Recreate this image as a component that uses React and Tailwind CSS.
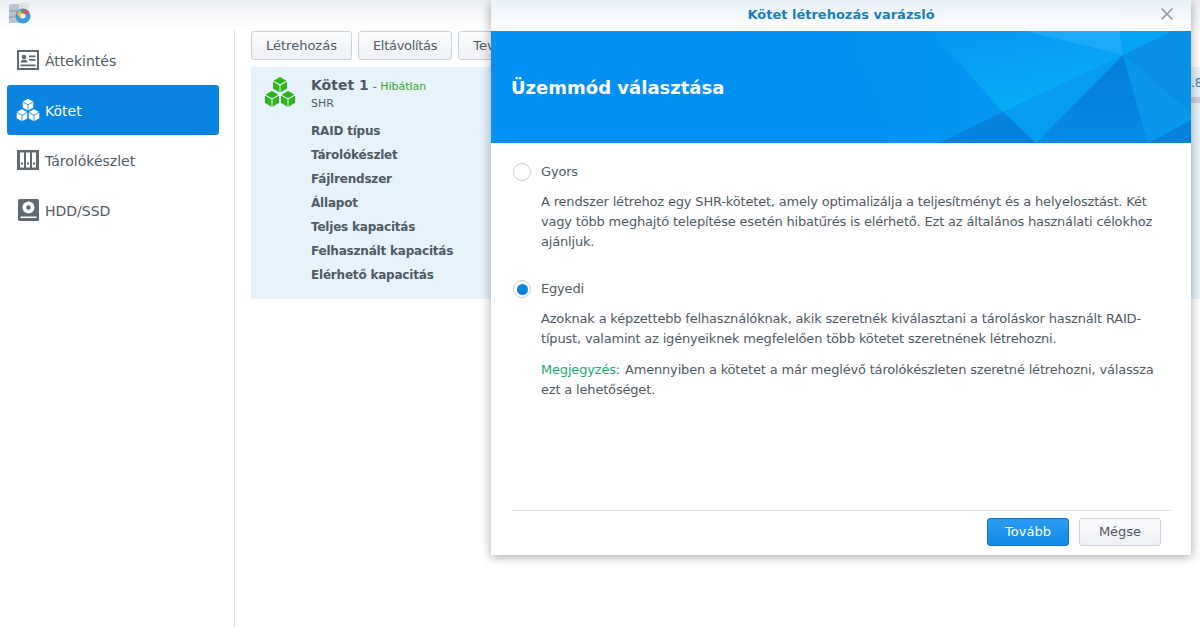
import React from "react";

// sidebar icons
function OverviewIcon() {
  return (
    <svg width="22" height="20" viewBox="0 0 22 20" className="shrink-0">
      <rect width="22" height="20" fill="#5f6972" />
      <rect x="2" y="2" width="18" height="16" fill="#fff" />
      <circle cx="7" cy="7" r="2.300" fill="#5f6972" />
      <path d="M3.500 12.500c0-2 1.500-2.800 3.500-2.800s3.500.8 3.500 2.800z" fill="#5f6972" />
      <path d="M12 5.500h6.500v1.800H12zM12 9h6.500v1.800H12zM3.500 14.500h15v1.800h-15z" fill="#5f6972" />
    </svg>
  );
}

function CubesIcon({ size = 24, color = "#fff", line = "#0a84e0" }) {
  return (
    <svg width={size} height={size} viewBox="0 0 24 24" className="shrink-0">
      <g fill={color} stroke={line} strokeWidth="0.800" strokeLinejoin="round">
        <path d="M12 0.300l5.700 3.200v6.300L12 13l-5.700-3.200V3.500z" />
        <path d="M6 10.800l5.700 3.200v6.500L6 23.700 0.300 20.500V14z" />
        <path d="M18 10.800l5.700 3.200v6.500L18 23.700l-5.700-3.200V14z" />
        <path d="M6.300 3.500L12 6.700l5.700-3.200M12 6.700V13M0.300 14L6 17.200 11.700 14M6 17.200v6.500M12.300 14L18 17.200 23.700 14M18 17.200v6.500" fill="none" />
      </g>
    </svg>
  );
}

function PoolIcon() {
  return (
    <svg width="22" height="20" viewBox="0 0 22 20" className="shrink-0">
      <rect width="22" height="20" fill="#5f6972" />
      <path d="M3 2.500h4v15H3zM9 2.500h4v15H9zM15 2.500h4v15h-4z" fill="#fff" />
      <path d="M4 12.500h2v2H4zM10 12.500h2v2h-2zM16 12.500h2v2h-2z" fill="#5f6972" />
    </svg>
  );
}

function DiskIcon() {
  return (
    <svg width="21" height="22" viewBox="0 0 21 22" className="shrink-0">
      <rect width="21" height="22" rx="1.500" fill="#5f6972" />
      <circle cx="10.500" cy="8.500" r="6" fill="#fff" />
      <circle cx="10.500" cy="8.500" r="2.200" fill="#5f6972" />
      <path d="M2.500 17.500h16v1.500h-16z" fill="#fff" />
    </svg>
  );
}

function AppIcon() {
  return (
    <svg width="24" height="26" viewBox="0 0 24 26" className="shrink-0">
      <path d="M1 5l3-1h16v4l-3 15H1z" fill="#b9c3cf" />
      <path d="M1 11h18M1 17h12" stroke="#8e9aa8" strokeWidth="1" />
      <rect x="11" y="3" width="10" height="12" fill="#dfe3e8" />
      <circle cx="15" cy="16" r="7.500" fill="#3a9be0" />
      <path d="M15 9a7 7 0 0 1 6 4l-6 3z" fill="#e2574c" />
      <path d="M9 14a7 7 0 0 1 3-4l3 6-2 3z" fill="#f0c33c" />
      <circle cx="15" cy="16" r="2.500" fill="#eaf3fb" />
    </svg>
  );
}

function BannerArt() {
  return (
    <svg width="700" height="112" viewBox="0 0 700 112" className="absolute left-0 top-0">
      <defs>
        <linearGradient id="glow" x1="0.200" y1="0" x2="0.650" y2="1">
          <stop offset="0" stopColor="#0797f5" />
          <stop offset="1" stopColor="#05b0f6" />
        </linearGradient>
        <linearGradient id="fade" x1="0" y1="0" x2="1" y2="0">
          <stop offset="0" stopColor="#0392f3" />
          <stop offset="1" stopColor="#0799f4" />
        </linearGradient>
        <linearGradient id="dark" x1="0" y1="0" x2="0" y2="1">
          <stop offset="0" stopColor="#057fd9" />
          <stop offset="1" stopColor="#068ae6" />
        </linearGradient>
      </defs>
      <path d="M352 0H700V112H404z" fill="url(#fade)" />
      <path d="M440 0H533L632 24 512 81z" fill="url(#glow)" />
      <path d="M533 0H629L632 24z" fill="#1caaf6" />
      <path d="M629 0H682L632 24z" fill="#02a4f3" />
      <path d="M682 0H700V82L632 24z" fill="#0a8fe6" />
      <path d="M512 81L632 24 545 112z" fill="#069cef" />
      <path d="M448 112L512 81 545 112z" fill="#0581dc" />
      <path d="M632 24L545 112H657z" fill="url(#dark)" />
      <path d="M632 24L700 82 657 112z" fill="#0a96ea" />
      <path d="M657 112L700 89V112z" fill="#0780d8" />
    </svg>
  );
}

const navItems = [
  { label: "Áttekintés", icon: <OverviewIcon /> },
  { label: "Kötet", icon: <CubesIcon />, active: true },
  { label: "Tárolókészlet", icon: <PoolIcon /> },
  { label: "HDD/SSD", icon: <DiskIcon /> },
];

const volumeRows = ["RAID típus", "Tárolókészlet", "Fájlrendszer", "Állapot", "Teljes kapacitás", "Felhasznált kapacitás", "Elérhető kapacitás"];

function ToolButton({ children, className = "" }) {
  return (
    <button className={`h-[29px] px-[14px] shrink-0 rounded-[3px] border border-[#c9d2da] bg-gradient-to-b from-[#fafbfc] to-[#eef2f6] text-[13px] text-[#505a64] ${className}`}>
      {children}
    </button>
  );
}

function Radio({ checked }) {
  return (
    <span className="w-[18px] h-[18px] rounded-full border border-[#c5ced6] bg-white flex items-center justify-center shrink-0">
      {checked && <span className="w-[11px] h-[11px] rounded-full bg-[#0a84e0]" />}
    </span>
  );
}

export default function App() {
  return (
    <div className="relative w-[1200px] h-[627px] overflow-hidden bg-white text-[13px] text-[#505a64] font-['DejaVu_Sans',Verdana,sans-serif]">
      <div className="h-[30px] bg-gradient-to-b from-[#eceff3] to-white pl-[8px]">
        <AppIcon />
      </div>
      <div className="flex h-[597px]">
        <aside className="w-[235px] shrink-0 border-r border-[#dfe3e7] pl-[7px] pr-[15px] pt-[5px]">
          {navItems.map(item => (
            <div key={item.label} className={`h-[50px] flex items-center gap-[5px] pl-[9px] rounded-[3px] text-[14px] ${item.active ? "bg-[#0a84e0] text-white" : "text-[#505a64]"}`}>
              <span className="w-[24px] flex justify-center">{item.icon}</span>
              <span className="pt-[2px]">{item.label}</span>
            </div>
          ))}
        </aside>
        <main className="flex-1 min-w-0 pl-[16px]">
          <div className="flex gap-[6px] pt-[1px] overflow-hidden">
            <ToolButton>Létrehozás</ToolButton>
            <ToolButton className="tracking-[-0.3px]">Eltávolítás</ToolButton>
            <ToolButton>Tevékenység</ToolButton>
          </div>
          <div className="mt-[7px] h-[232px] bg-[#e6f3fb] flex pl-[13px] pt-[8px]">
            <div className="w-[47px] pt-[1px]">
              <CubesIcon size={32} color="#2fb51c" line="#e6f3fb" />
            </div>
            <div>
              <div className="flex items-baseline gap-[4px] h-[18px]">
                <span className="text-[14px] font-bold">Kötet 1</span>
                <span className="text-[11px]">- <span className="text-[#3aa820]">Hibátlan</span></span>
              </div>
              <div className="text-[11px] mt-[3px] h-[23px]">SHR</div>
              {volumeRows.map(row => (
                <div key={row} className="h-[24px] leading-[24px] text-[12px] font-bold tracking-[-0.2px]">{row}</div>
              ))}
            </div>
            <div className="ml-auto w-[9px] overflow-hidden pt-[1px]">
              <div className="text-[12px] leading-[14px] text-[#3a7fc0]">.8</div>
              <div className="mt-[7px] h-[6px] bg-[#cfd3d6]" />
            </div>
          </div>
        </main>
      </div>

      {/* varázsló ablak */}
      <div className="absolute left-[491px] top-0 w-[700px] h-[555px] bg-white shadow-[0_2px_10px_rgba(0,0,0,0.35)] flex flex-col">
        <div className="h-[31px] shrink-0 relative flex items-center justify-center pb-[2px] bg-gradient-to-b from-[#e8f1f9] to-white">
          <span className="text-[13px] font-bold text-[#1a7dc4]">Kötet létrehozás varázsló</span>
          <svg width="14" height="14" viewBox="0 0 14 14" className="absolute right-[17px] top-[7px]">
            <path d="M1.500 1.500l11 11M12.500 1.500l-11 11" stroke="#8e979f" strokeWidth="1.500" />
          </svg>
        </div>
        <div className="h-[112px] shrink-0 relative overflow-hidden bg-[#0390f2] flex items-center pl-[20px]">
          <BannerArt />
          <h1 className="relative text-[18px] font-bold text-white">Üzemmód választása</h1>
        </div>
        <div className="flex-1 pl-[22px] pr-[20px] pt-[19px] tracking-[-0.18px]">
          <label className="flex items-center gap-[10px] h-[20px]">
            <Radio />
            <span>Gyors</span>
          </label>
          <p className="ml-[28px] mt-[10px] leading-[20px]">
            A rendszer létrehoz egy SHR-kötetet, amely optimalizálja a teljesítményt és a helyelosztást. Két vagy több meghajtó telepítése esetén hibatűrés is elérhető. Ezt az általános használati célokhoz ajánljuk.
          </p>
          <label className="flex items-center gap-[10px] h-[20px] mt-[27px]">
            <Radio checked />
            <span>Egyedi</span>
          </label>
          <p className="ml-[28px] mt-[10px] leading-[20px]">
            Azoknak a képzettebb felhasználóknak, akik szeretnék kiválasztani a tároláskor használt RAID-típust, valamint az igényeiknek megfelelően több kötetet szeretnének létrehozni.
          </p>
          <p className="ml-[28px] mt-[11px] leading-[20px]">
            <span className="text-[#1ea672] pr-px">Megjegyzés:</span> Amennyiben a kötetet a már meglévő tárolókészleten szeretné létrehozni, válassza ezt a lehetőséget.
          </p>
        </div>
        <div className="mx-[20px] h-[45px] shrink-0 border-t border-[#dfe3e7] flex justify-end items-start gap-[10px] pt-[7px] pr-[10px]">
          <button className="w-[82px] h-[28px] rounded-[3px] border border-[#0a78cc] bg-gradient-to-b from-[#2b9bf0] to-[#0f88e6] text-white">Tovább</button>
          <button className="w-[82px] h-[28px] rounded-[3px] border border-[#ccd3da] bg-gradient-to-b from-[#f8f9fb] to-[#eef1f5]">Mégse</button>
        </div>
      </div>
    </div>
  );
}
